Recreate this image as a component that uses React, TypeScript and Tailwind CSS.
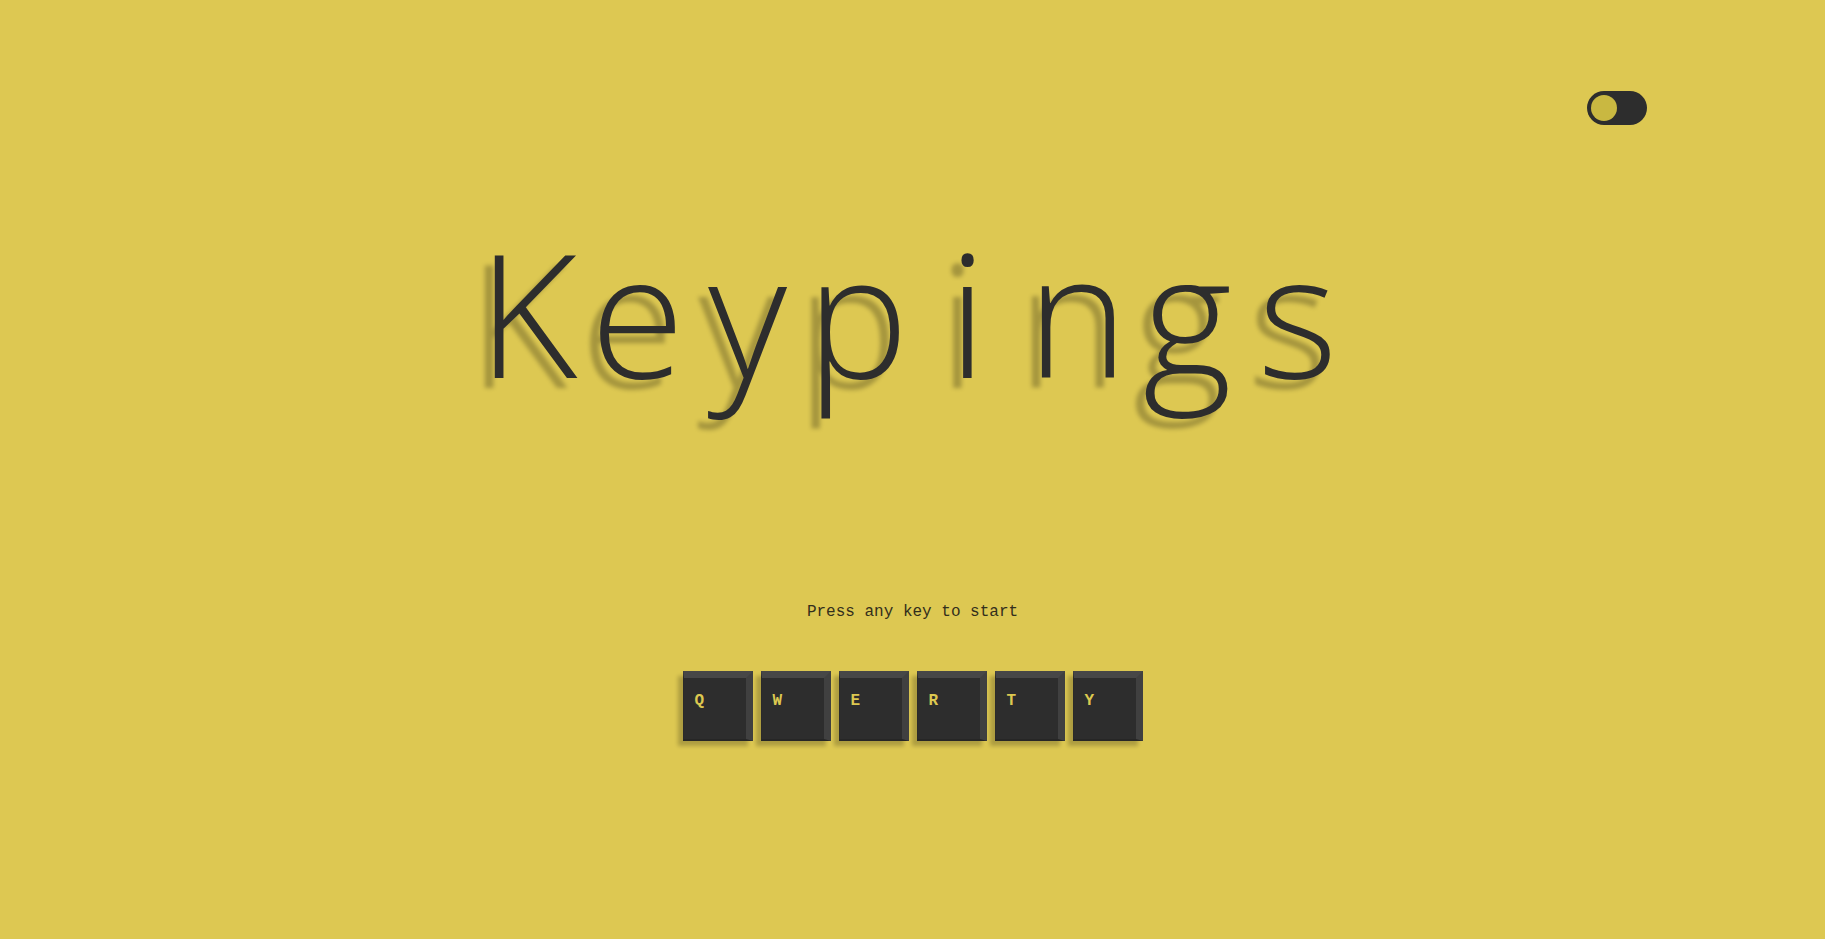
import React from "react";

const TITLE = ["K", "e", "y", "p", "i", "n", "g", "s"];
const KEYS = ["Q", "W", "E", "R", "T", "Y"];

function Key({ label }: { label: string }) {
  return (
    <div className="w-[70px] h-[70px] box-border bg-[#2d2d2d] border-t-[7px] border-t-[#474747] border-r-[7px] border-r-[#404040] border-b-2 border-b-[#262626] border-l border-l-[#2a2a2a] pt-[13px] pl-[11px] shadow-[-5px_5px_4px_rgba(0,0,0,0.22)]">
      <span className="block font-['Liberation_Mono',monospace] font-bold text-[16px] leading-[20px] text-[#dcc850]">
        {label}
      </span>
    </div>
  );
}

export default function App() {
  return (
    <div className="min-h-screen w-full bg-[#ddc852] flex flex-col items-center">
      <div className="w-full flex justify-end pt-[91px] pr-[178px]">
        <div className="w-[60px] h-[34px] rounded-full bg-[#2d2d2d] p-[4px] flex items-center">
          <div className="w-[26px] h-[26px] rounded-full bg-[#c9b841]" />
        </div>
      </div>

      <h1 className="mt-[100px] flex font-['Open_Sans','Noto_Sans',sans-serif] font-light text-[172px] leading-none text-[#2d2d2d] [text-shadow:-10px_10px_4px_rgba(0,0,0,0.25)]">
        {TITLE.map((c, i) => (
          <span key={i} className="w-[110px] text-center">
            {c}
          </span>
        ))}
      </h1>

      <p className="mt-[203px] font-['Liberation_Mono',monospace] text-[16px] leading-[24px] text-[#332f1c]">
        Press any key to start
      </p>

      <div className="mt-[47px] flex gap-[8px]">
        {KEYS.map((k) => (
          <Key key={k} label={k} />
        ))}
      </div>
    </div>
  );
}
